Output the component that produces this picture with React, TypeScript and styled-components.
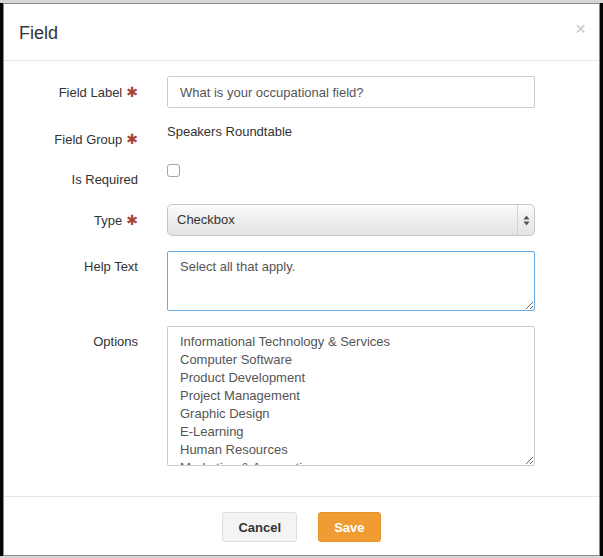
import React from 'react';
import { createGlobalStyle, styled } from 'styled-components';

const GlobalStyle = createGlobalStyle`
  html, body {
    margin: 0;
    padding: 0;
  }
  body {
    background: linear-gradient(#d4d8db 0 3px, #050505 3px);
    font-family: 'Liberation Sans', Arial, sans-serif;
    font-size: 13px;
    color: #333;
  }
`;

const Modal = styled.div`
  width: 597px;
  margin: 3px 0 0 3px;
  box-sizing: border-box;
  background: #fff;
  border: 1px solid #8a8a8a;
`;

const Header = styled.div`
  display: flex;
  justify-content: space-between;
  align-items: flex-start;
  padding: 16px 15px 13px;
  border-bottom: 1px solid #e5e5e5;
`;

const Title = styled.h4`
  margin: 0;
  font-size: 18px;
  line-height: 27px;
  font-weight: 400;
  color: #333;
`;

const Close = styled.button`
  background: none;
  border: 0;
  padding: 0;
  margin: -1px -2px 0 0;
  font-family: 'Liberation Sans', Arial, sans-serif;
  font-size: 19px;
  line-height: 1;
  color: #c9c9c9;
  cursor: pointer;
`;

const Body = styled.div`
  padding: 15px 0 30px;
`;

const Form = styled.div`
  display: flex;
  flex-direction: column;
  gap: 15px;
`;

const Row = styled.div`
  display: grid;
  grid-template-columns: 148px 398px;
`;

const Label = styled.label`
  padding: 7px 14px 0 15px;
  text-align: right;
  font-size: 13px;
  line-height: 18px;
  color: #333;
`;

const Required = styled.span`
  margin-left: 4px;
  color: #ad3f3b;
  font-family: 'DejaVu Sans', sans-serif;
  font-size: 14px;
`;

const Control = styled.div`
  padding: 0 15px;
`;

const TextInput = styled.input`
  display: block;
  width: 100%;
  height: 32px;
  box-sizing: border-box;
  padding: 6px 12px;
  border: 1px solid #ccc;
  border-radius: 2px;
  font-family: inherit;
  font-size: 13px;
  color: #555;
  outline: none;
`;

const StaticText = styled.div`
  font-size: 13px;
  line-height: 18px;
  color: #333;
`;

const Check = styled.input`
  appearance: none;
  display: block;
  width: 13px;
  height: 13px;
  margin: 0;
  border: 1px solid #a5a5a5;
  border-radius: 3px;
  background: #fff;
`;

const SelectBox = styled.div`
  display: flex;
  height: 32px;
  box-sizing: border-box;
  border: 1px solid #c6c6c6;
  border-radius: 5px;
  background: linear-gradient(#fbfbfb, #f0f0f0 40%, #e4e4e4);
  box-shadow: inset 0 1px 0 #fff;
`;

const SelectValue = styled.div`
  flex: 1;
  padding-left: 9px;
  line-height: 30px;
  font-size: 13px;
  color: #333;
`;

const SelectArrows = styled.div`
  width: 16px;
  border-left: 1px solid #d2d2d2;
  display: flex;
  align-items: center;
  justify-content: center;
`;

const TextArea = styled.textarea<{ $height: number; $focused?: boolean }>`
  display: block;
  width: 100%;
  height: ${(p) => p.$height}px;
  box-sizing: border-box;
  padding: 6px 12px;
  border: 1px solid ${(p) => (p.$focused ? '#66abe4' : '#ccc')};
  border-radius: 2px;
  font-family: inherit;
  font-size: 13px;
  line-height: 18px;
  color: #555;
  resize: vertical;
  overflow: hidden;
  outline: none;
`;

const Footer = styled.div`
  display: flex;
  justify-content: center;
  gap: 21px;
  padding: 15px 15px 13px;
  border-top: 1px solid #e5e5e5;
`;

const Button = styled.button<{ $primary?: boolean }>`
  height: 30px;
  padding: 0 15px;
  border: 1px solid ${(p) => (p.$primary ? '#e7922c' : '#dedede')};
  border-radius: 3px;
  background: ${(p) => (p.$primary ? '#ef9c33' : '#f4f4f4')};
  color: ${(p) => (p.$primary ? '#fff' : '#333')};
  font-family: 'Liberation Sans', Arial, sans-serif;
  font-size: 13px;
  font-weight: 700;
  cursor: pointer;
`;

const options = [
  'Informational Technology & Services',
  'Computer Software',
  'Product Development',
  'Project Management',
  'Graphic Design',
  'E-Learning',
  'Human Resources',
  'Marketing & Accounting',
  'Sales',
];

export default function App() {
  return (
    <>
      <GlobalStyle />
      <Modal>
        <Header>
          <Title>Field</Title>
          <Close type="button" aria-label="Close">
            ×
          </Close>
        </Header>

        <Body>
          <Form>
            <Row>
              <Label>
                Field Label<Required>✱</Required>
              </Label>
              <Control>
                <TextInput defaultValue="What is your occupational field?" />
              </Control>
            </Row>

            <Row>
              <Label>
                Field Group<Required>✱</Required>
              </Label>
              <Control>
                <StaticText>Speakers Roundtable</StaticText>
              </Control>
            </Row>

            <Row>
              <Label>Is Required</Label>
              <Control>
                <Check type="checkbox" />
              </Control>
            </Row>

            <Row>
              <Label>
                Type<Required>✱</Required>
              </Label>
              <Control>
                <SelectBox>
                  <SelectValue>Checkbox</SelectValue>
                  <SelectArrows>
                    <svg width="7" height="11" viewBox="0 0 7 11">
                      <path d="M3.5 0.5 L6.5 4.5 H0.5 Z" fill="#555" />
                      <path d="M3.5 10.5 L6.5 6.5 H0.5 Z" fill="#555" />
                    </svg>
                  </SelectArrows>
                </SelectBox>
              </Control>
            </Row>

            <Row>
              <Label>Help Text</Label>
              <Control>
                <TextArea $height={60} $focused defaultValue="Select all that apply." />
              </Control>
            </Row>

            <Row>
              <Label>Options</Label>
              <Control>
                <TextArea $height={140} defaultValue={options.join('\n')} />
              </Control>
            </Row>
          </Form>
        </Body>

        <Footer>
          <Button type="button">Cancel</Button>
          <Button type="button" $primary>
            Save
          </Button>
        </Footer>
      </Modal>
    </>
  );
}
